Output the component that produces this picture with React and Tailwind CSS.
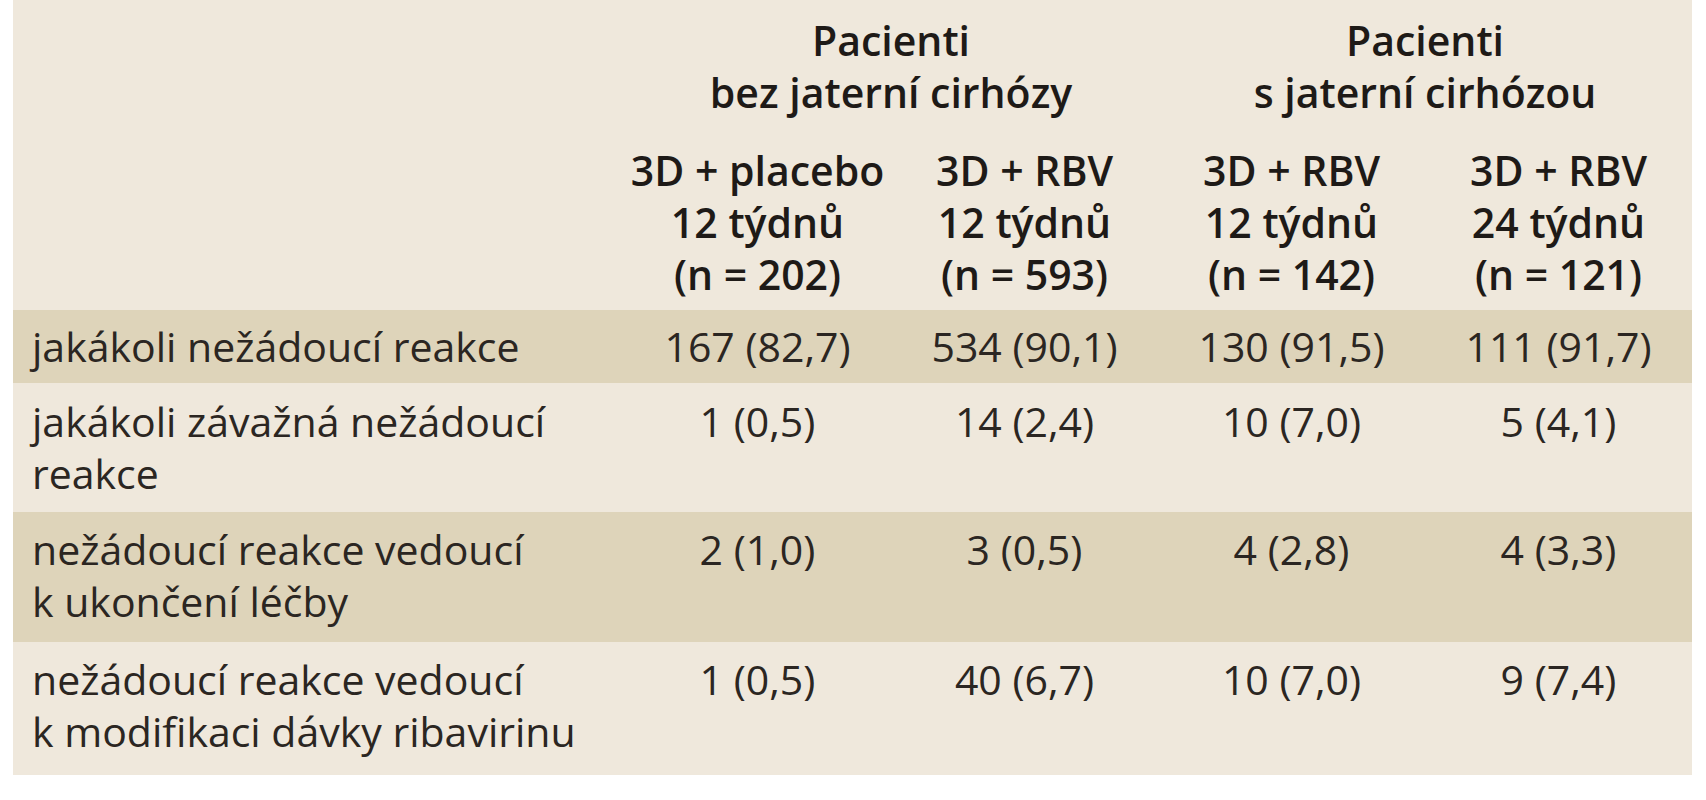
export default function App() {
  const rows = [
    { label: ["jakákoli nežádoucí reakce"], vals: ["167 (82,7)", "534 (90,1)", "130 (91,5)", "111 (91,7)"], dark: true, h: "h-[73px]", pt: "pt-[10px]" },
    { label: ["jakákoli závažná nežádoucí", "reakce"], vals: ["1 (0,5)", "14 (2,4)", "10 (7,0)", "5 (4,1)"], dark: false, h: "h-[129px]", pt: "pt-[12px]" },
    { label: ["nežádoucí reakce vedoucí", "k ukončení léčby"], vals: ["2 (1,0)", "3 (0,5)", "4 (2,8)", "4 (3,3)"], dark: true, h: "h-[130px]", pt: "pt-[11px]" },
    { label: ["nežádoucí reakce vedoucí", "k modifikaci dávky ribavirinu"], vals: ["1 (0,5)", "40 (6,7)", "10 (7,0)", "9 (7,4)"], dark: false, h: "h-[133px]", pt: "pt-[11px]" },
  ];
  const heads = [
    ["3D + placebo", "12 týdnů", "(n = 202)"],
    ["3D + RBV", "12 týdnů", "(n = 593)"],
    ["3D + RBV", "12 týdnů", "(n = 142)"],
    ["3D + RBV", "24 týdnů", "(n = 121)"],
  ];
  return (
    <div className="w-[1706px] h-[800px] bg-white" style={{ fontFamily: "'Open Sans', Lato, sans-serif" }}>
      <div className="ml-[13px] w-[1679px] bg-[#efe8dc] text-[41px] leading-[52px] text-[#2b2622]">
        <div className="grid grid-cols-[611px_534px_534px] pt-[14px] h-[130px] font-semibold text-[#1e1a17]">
          <div></div>
          <div className="text-center">
            <div>Pacienti</div>
            <div>bez jaterní cirhózy</div>
          </div>
          <div className="text-center">
            <div>Pacienti</div>
            <div>s jaterní cirhózou</div>
          </div>
        </div>
        <div className="grid grid-cols-[611px_267px_267px_267px_267px] pt-[14px] h-[180px] font-semibold text-[#1e1a17]">
          <div></div>
          {heads.map((h, i) => (
            <div key={i} className="text-center">
              {h.map((l, j) => (
                <div key={j}>{l}</div>
              ))}
            </div>
          ))}
        </div>
        {rows.map((r, i) => (
          <div
            key={i}
            className={`grid grid-cols-[611px_267px_267px_267px_267px] ${r.h} ${r.pt} ${r.dark ? "bg-[#ded4ba]" : "bg-[#efe8dc]"}`}
          >
            <div className="pl-[19px]">
              {r.label.map((l, j) => (
                <div key={j}>{l}</div>
              ))}
            </div>
            {r.vals.map((v, j) => (
              <div key={j} className="text-center">{v}</div>
            ))}
          </div>
        ))}
      </div>
    </div>
  );
}
